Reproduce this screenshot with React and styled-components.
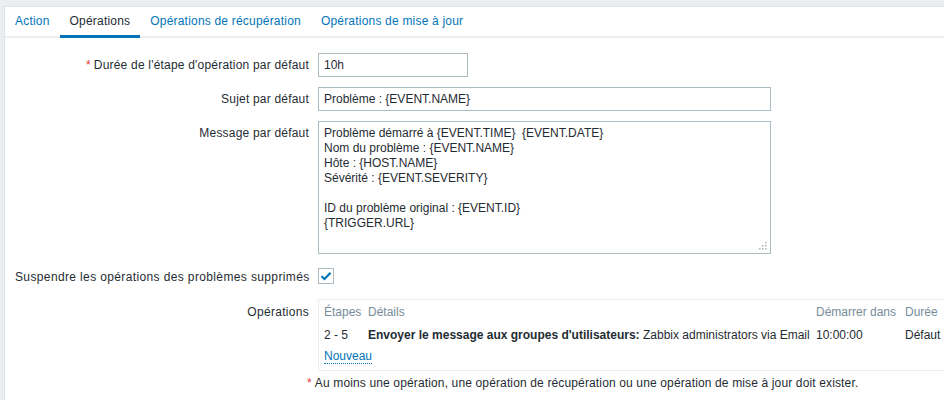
import React from "react"
import styled, { createGlobalStyle } from "styled-components"

const GlobalStyle = createGlobalStyle`
  html, body {
    margin: 0;
    padding: 0;
    background: #ebeef0;
    overflow: hidden;
  }
  body {
    font-family: "Liberation Sans", Arial, sans-serif;
    font-size: 12px;
    color: #1f2c33;
  }
`

const Page = styled.div`
  padding: 6px 0 0 4px;
  width: 980px;
`

const Panel = styled.div`
  background: #fff;
  border-top: 1px solid #dfe4e7;
  border-left: 1px solid #dfe4e7;
  min-height: 400px;
`

const TabBar = styled.ul`
  display: flex;
  list-style: none;
  margin: 0;
  padding: 0;
  border-bottom: 2px solid #ebeef0;
  height: 29px;
`

const Tab = styled.li`
  padding: 2px 10px 0;
  line-height: 25px;
  letter-spacing: 0.2px;
  color: ${p => (p.$active ? "#1f2c33" : "#0275b8")};
  border-bottom: 3px solid ${p => (p.$active ? "#0275b8" : "transparent")};
  margin-bottom: -2px;
  white-space: nowrap;
  cursor: pointer;
`

const Form = styled.div`
  display: grid;
  grid-template-columns: 294px 1fr;
  column-gap: 9px;
  row-gap: 10px;
  padding: 15px 0 0 10px;
`

const Label = styled.div`
  text-align: right;
  padding-top: ${p => p.$top ?? 5}px;
  line-height: 14px;
  letter-spacing: ${p => p.$ls ?? 0.2}px;
  white-space: nowrap;
`

const Req = styled.span`
  color: #e33734;
  margin-right: 3px;
`

const Field = styled.div`
  display: flex;
  align-items: flex-start;
  min-height: ${p => p.$h ?? 0}px;
`

const TextBox = styled.div`
  box-sizing: border-box;
  width: ${p => p.$w}px;
  height: 24px;
  border: 1px solid #acbbc2;
  padding: 0 5px;
  line-height: 22px;
  white-space: pre;
  overflow: hidden;
`

const TextArea = styled.div`
  position: relative;
  box-sizing: border-box;
  width: 453px;
  height: 133px;
  border: 1px solid #acbbc2;
  padding: 4px 5px;
  line-height: 15px;
  white-space: pre;
`

const Grip = styled.svg`
  position: absolute;
  right: 3px;
  bottom: 3px;
`

const CheckBox = styled.div`
  box-sizing: border-box;
  width: 16px;
  height: 16px;
  margin-top: 4px;
  border: 1px solid #acbbc2;
  display: flex;
  align-items: center;
  justify-content: center;
`

const OpsBox = styled.div`
  box-sizing: border-box;
  width: 660px;
  border: 1px solid #ebeef0;
  padding: 5px 5px 0;
  height: 72px;
`

const OpsTable = styled.table`
  border-collapse: collapse;
  td, th {
    padding: 0;
    text-align: left;
    vertical-align: top;
    white-space: nowrap;
    line-height: 14px;
  }
  th {
    font-weight: normal;
    color: #768d99;
    height: 23px;
  }
  td {
    height: 21px;
  }
`

const Col = styled.col`
  width: ${p => p.$w}px;
`

const LinkDotted = styled.a`
  color: #0275b8;
  text-decoration: none;
  border-bottom: 1px dotted #0275b8;
  line-height: 14px;
  cursor: pointer;
`

const Note = styled.div`
  padding: 5px 0 0 302px;
  line-height: 14px;
  letter-spacing: 0.14px;
  white-space: nowrap;
`

const message = `Problème démarré à {EVENT.TIME}  {EVENT.DATE}
Nom du problème : {EVENT.NAME}
Hôte : {HOST.NAME}
Sévérité : {EVENT.SEVERITY}

ID du problème original : {EVENT.ID}
{TRIGGER.URL}`

const tabs = ["Action", "Opérations", "Opérations de récupération", "Opérations de mise à jour"]

export default function App() {
  return (
    <>
      <GlobalStyle />
      <Page>
        <Panel>
          <TabBar>
            {tabs.map(t => (
              <Tab key={t} $active={t === "Opérations"}>{t}</Tab>
            ))}
          </TabBar>
          <Form>
            <Label><Req>*</Req>Durée de l'étape d'opération par défaut</Label>
            <Field><TextBox $w={150}>10h</TextBox></Field>

            <Label>Sujet par défaut</Label>
            <Field><TextBox $w={453}>Problème : {"{EVENT.NAME}"}</TextBox></Field>

            <Label $top={5}>Message par défaut</Label>
            <Field>
              <TextArea>
                {message}
                <Grip width="8" height="8" viewBox="0 0 8 8">
                  <g fill="#b4b4b4">
                    <rect x="6" y="0" width="1.5" height="1.5" />
                    <rect x="3" y="3" width="1.5" height="1.5" />
                    <rect x="6" y="3" width="1.5" height="1.5" />
                    <rect x="0" y="6" width="1.5" height="1.5" />
                    <rect x="3" y="6" width="1.5" height="1.5" />
                    <rect x="6" y="6" width="1.5" height="1.5" />
                  </g>
                </Grip>
              </TextArea>
            </Field>

            <Label $top={6} $ls={0.37}>Suspendre les opérations des problèmes supprimés</Label>
            <Field $h={25}>
              <CheckBox>
                <svg width="12" height="10" viewBox="0 0 12 10">
                  <path d="M1.5 5.2 L4.5 8 L10.5 1.8" fill="none" stroke="#0275b8" strokeWidth="2.2" />
                </svg>
              </CheckBox>
            </Field>

            <Label $top={6} $ls={0.3}>Opérations</Label>
            <Field>
              <OpsBox>
                <OpsTable>
                  <colgroup>
                    <Col $w={44} />
                    <Col $w={448} />
                    <Col $w={89} />
                    <Col $w={60} />
                  </colgroup>
                  <thead>
                    <tr>
                      <th>Étapes</th>
                      <th>Détails</th>
                      <th>Démarrer dans</th>
                      <th>Durée</th>
                    </tr>
                  </thead>
                  <tbody>
                    <tr>
                      <td>2 - 5</td>
                      <td><b>Envoyer le message aux groupes d'utilisateurs:</b> Zabbix administrators via Email</td>
                      <td>10:00:00</td>
                      <td>Défaut</td>
                    </tr>
                  </tbody>
                </OpsTable>
                <LinkDotted>Nouveau</LinkDotted>
              </OpsBox>
            </Field>
          </Form>
          <Note><Req>*</Req>Au moins une opération, une opération de récupération ou une opération de mise à jour doit exister.</Note>
        </Panel>
      </Page>
    </>
  )
}
